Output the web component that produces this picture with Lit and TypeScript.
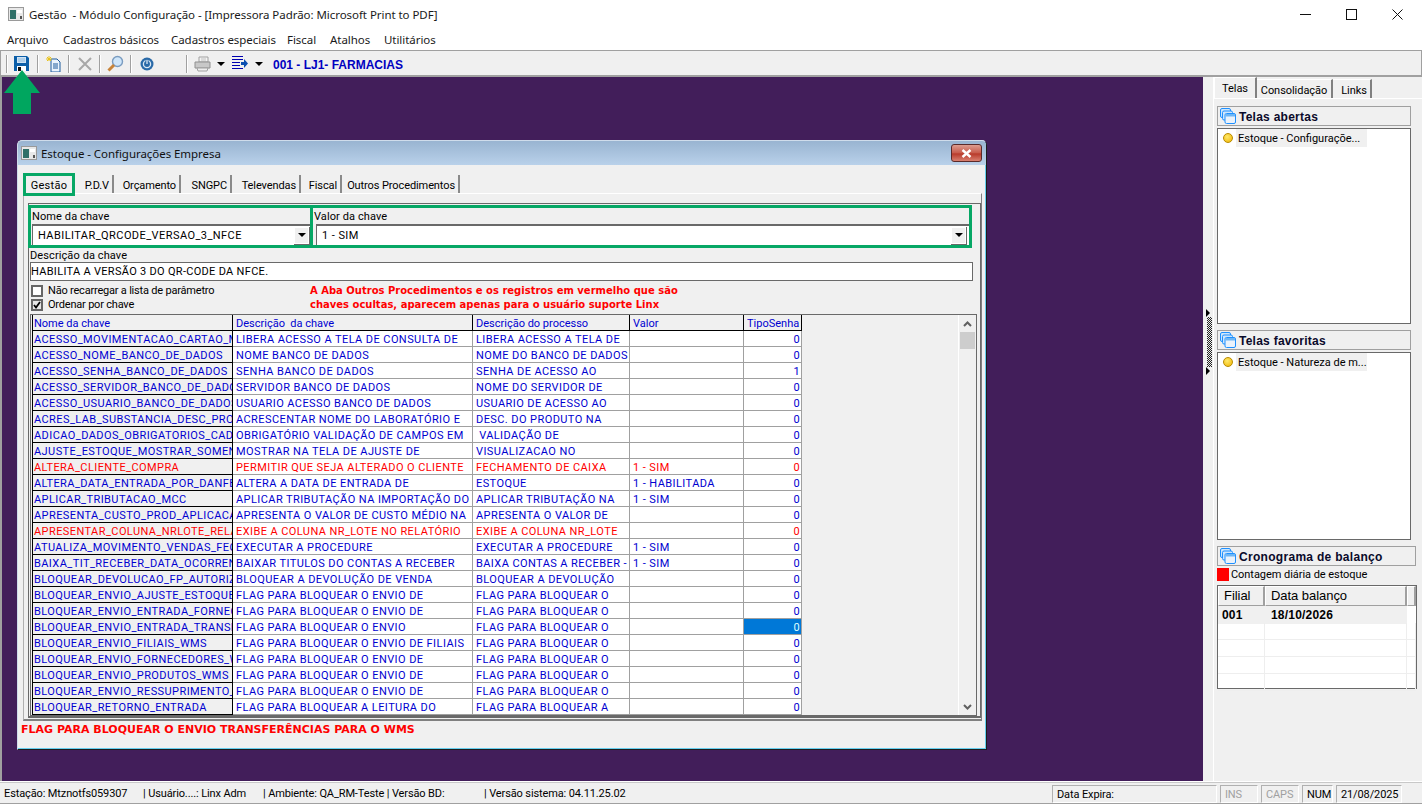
import { LitElement, css, html } from "lit";
import { customElement } from "lit/decorators.js";

type Row = { name: string; desc: string; proc: string; val?: string; tipo?: string; red?: boolean; sel?: boolean };

const FLAG = "FLAG PARA BLOQUEAR O ENVIO DE";
const FLAG2 = "FLAG PARA BLOQUEAR O";

const ROWS: Row[] = [
  { name: "ACESSO_MOVIMENTACAO_CARTAO_MANUAL", desc: "LIBERA ACESSO A TELA DE CONSULTA DE", proc: "LIBERA ACESSO A TELA DE" },
  { name: "ACESSO_NOME_BANCO_DE_DADOS", desc: "NOME BANCO DE DADOS", proc: "NOME DO BANCO DE DADOS" },
  { name: "ACESSO_SENHA_BANCO_DE_DADOS", desc: "SENHA BANCO DE DADOS", proc: "SENHA DE ACESSO AO", tipo: "1" },
  { name: "ACESSO_SERVIDOR_BANCO_DE_DADOS", desc: "SERVIDOR BANCO DE DADOS", proc: "NOME DO SERVIDOR DE" },
  { name: "ACESSO_USUARIO_BANCO_DE_DADOS", desc: "USUARIO ACESSO BANCO DE DADOS", proc: "USUARIO DE ACESSO AO" },
  { name: "ACRES_LAB_SUBSTANCIA_DESC_PROD", desc: "ACRESCENTAR NOME DO LABORATÓRIO E", proc: "DESC. DO PRODUTO NA" },
  { name: "ADICAO_DADOS_OBRIGATORIOS_CADASTRO", desc: "OBRIGATÓRIO VALIDAÇÃO DE CAMPOS EM", proc: " VALIDAÇÃO DE" },
  { name: "AJUSTE_ESTOQUE_MOSTRAR_SOMENTE", desc: "MOSTRAR NA TELA DE AJUSTE DE", proc: "VISUALIZACAO NO" },
  { name: "ALTERA_CLIENTE_COMPRA", desc: "PERMITIR QUE SEJA ALTERADO O CLIENTE", proc: "FECHAMENTO DE CAIXA", val: "1 - SIM", red: true },
  { name: "ALTERA_DATA_ENTRADA_POR_DANFE", desc: "ALTERA A DATA DE ENTRADA DE", proc: "ESTOQUE", val: "1 - HABILITADA" },
  { name: "APLICAR_TRIBUTACAO_MCC", desc: "APLICAR TRIBUTAÇÃO NA IMPORTAÇÃO DO", proc: "APLICAR TRIBUTAÇÃO NA", val: "1 - SIM" },
  { name: "APRESENTA_CUSTO_PROD_APLICACAO", desc: "APRESENTA O VALOR DE CUSTO MÉDIO NA", proc: "APRESENTA O VALOR DE" },
  { name: "APRESENTAR_COLUNA_NRLOTE_RELATORIO", desc: "EXIBE A COLUNA NR_LOTE NO RELATÓRIO", proc: "EXIBE A COLUNA NR_LOTE", red: true },
  { name: "ATUALIZA_MOVIMENTO_VENDAS_FECHAMENTO", desc: "EXECUTAR A PROCEDURE", proc: "EXECUTAR A PROCEDURE", val: "1 - SIM" },
  { name: "BAIXA_TIT_RECEBER_DATA_OCORRENCIA", desc: "BAIXAR TITULOS DO CONTAS A RECEBER", proc: "BAIXA CONTAS A RECEBER -", val: "1 - SIM" },
  { name: "BLOQUEAR_DEVOLUCAO_FP_AUTORIZADA", desc: "BLOQUEAR A DEVOLUÇÃO DE VENDA", proc: "BLOQUEAR A DEVOLUÇÃO" },
  { name: "BLOQUEAR_ENVIO_AJUSTE_ESTOQUE_WMS", desc: FLAG, proc: FLAG2 },
  { name: "BLOQUEAR_ENVIO_ENTRADA_FORNECEDOR", desc: FLAG, proc: FLAG2 },
  { name: "BLOQUEAR_ENVIO_ENTRADA_TRANSFERENCIA", desc: "FLAG PARA BLOQUEAR O ENVIO", proc: FLAG2, sel: true },
  { name: "BLOQUEAR_ENVIO_FILIAIS_WMS", desc: "FLAG PARA BLOQUEAR O ENVIO DE FILIAIS", proc: FLAG2 },
  { name: "BLOQUEAR_ENVIO_FORNECEDORES_WMS", desc: FLAG, proc: FLAG2 },
  { name: "BLOQUEAR_ENVIO_PRODUTOS_WMS", desc: FLAG, proc: FLAG2 },
  { name: "BLOQUEAR_ENVIO_RESSUPRIMENTO_WMS", desc: FLAG, proc: FLAG2 },
  { name: "BLOQUEAR_RETORNO_ENTRADA", desc: "FLAG PARA BLOQUEAR A LEITURA DO", proc: "FLAG PARA BLOQUEAR A" },
];

const TABS: [string, number][] = [
  ["Gestão", 52], ["P.D.V", 39], ["Orçamento", 67], ["SNGPC", 51], ["Televendas", 69], ["Fiscal", 41], ["Outros Procedimentos", 118],
];

const appIcon = html`<svg width="16" height="14" viewBox="0 0 16 14"><rect x=".5" y=".5" width="15" height="13" fill="#e8e8e8" stroke="#9a9a9a"/><rect x="2" y="3" width="6" height="9" fill="#2f7068"/><rect x="9" y="3" width="5" height="3" fill="#fff"/><rect x="12" y="9" width="2" height="3" fill="#555"/></svg>`;

const stackIcon = html`<svg width="16" height="16" viewBox="0 0 16 16"><rect x=".5" y=".5" width="10" height="9" rx="1.5" fill="#cfe6fb" stroke="#1e90ff"/><rect x="2.5" y="3" width="10" height="9" rx="1.5" fill="#cfe6fb" stroke="#1e90ff"/><rect x="5" y="5.5" width="10.5" height="10" rx="1.5" fill="#eaf2fb" stroke="#1e90ff"/><rect x="5.5" y="6" width="9.5" height="2.5" fill="#6db6f5"/></svg>`;

const arrowDown = html`<svg class="drop" width="8" height="4" viewBox="0 0 8 4"><path d="M0 0h8L4 4z" fill="#000"/></svg>`;

@customElement("app-root")
export class AppRoot extends LitElement {
  static styles = css`
    :host {
      display: flex;
      flex-direction: column;
      width: 1422px;
      height: 804px;
      overflow: hidden;
      background: #f0f0f0;
      font: 11px/14px Roboto, "Liberation Sans", sans-serif;
      letter-spacing: -.05px;
      color: #000;
    }
    * { box-sizing: border-box; }

    .titlebar { height: 30px; background: #fff; display: flex; align-items: center; padding: 0 2px 2px 8px; }
    .titlebar .app { font: 11.5px "Noto Sans", sans-serif; letter-spacing: -.05px; margin-left: 5px; white-space: pre; color: #1a1a1a; flex: 1; }
    .winbtn { width: 46px; height: 28px; display: flex; align-items: center; justify-content: center; }
    .menubar { height: 20px; background: #fff; display: flex; align-items: center; font: 11.5px "Noto Sans", sans-serif; letter-spacing: -.05px; color: #1a1a1a; padding: 0 0 2px 7px; }
    .menubar span { white-space: nowrap; }

    .toolbar { height: 27px; background: #f0f0f0; border: 1px solid #a0a0a0; border-bottom: 2px solid #a0a0a0; display: flex; align-items: center; padding: 1px 0 0 5px; }
    .toolbar .sep, .toolbar .grip { width: 2px; height: 18px; background: linear-gradient(90deg, #a0a0a0 50%, #fff 50%); flex: none; }
    .toolbar .ic { display: flex; align-items: center; justify-content: center; flex: none; height: 18px; }
    .toolbar .drop { flex: none; }
    .store { font: bold 12px "Liberation Sans", sans-serif; color: #0000c0; letter-spacing: 0; white-space: pre; margin: 2px 0 0 10px; }

    .body { flex: 1; display: flex; min-height: 0; }
    .desktop { position: relative; width: 1203px; background: #421e5a; border-left: 2px solid #a0a0a0; }
    .up-arrow { position: absolute; left: 2px; top: -7px; z-index: 2; }

    .dialog {
      position: absolute; left: 15px; top: 63px; width: 970px; height: 610px;
      background: #f0f0f0; border-radius: 5px 5px 0 0;
      border: 1px solid #1d1d1d; border-top-color: #cfdceb; border-left-color: #cfdceb;
      box-shadow: inset -1px -1px 0 #66cfef;
      display: flex; flex-direction: column;
    }
    .dlg-title {
      height: 24px; flex: none; display: flex; align-items: center; padding: 0 3px;
      background: linear-gradient(#99b4d1, #b9d1ea);
      border-radius: 4px 4px 0 0;
    }
    .dlg-title .t { font: 11.5px "Noto Sans", sans-serif; letter-spacing: -.05px; margin-left: 4px; flex: 1; color: #111; }
    .dlg-close {
      width: 31px; height: 18px; margin-right: 1px; border: 1px solid #5a2a2a; border-radius: 3px;
      background: linear-gradient(#dd9d90, #c75a4a 50%, #b83a2a 55%, #d98070);
      display: flex; align-items: center; justify-content: center;
    }
    .dlg-body { flex: 1; padding: 0 4px 0 5px; display: flex; flex-direction: column; }
    .tabs { display: flex; height: 28px; padding: 10px 0 0 2px; flex: none; }
    .tab { height: 18px; border-right: 2px solid #8a8a8a; text-align: right; padding-right: 3px; white-space: nowrap; line-height: 21px; letter-spacing: -.1px; }
    .tab.on { height: 23px; margin: -2px 0 -3px -2px; line-height: 19px; border: 3px solid #06a765; position: relative; z-index: 1; text-align: center; padding: 0; letter-spacing: .3px; }

    .page { height: 528px; width: 959px; flex: none; border-top: 1px solid #fff; border-right: 1px solid #808080; border-bottom: 2px solid #808080; border-left: 1px solid #b0b0b0; padding: 9px 0 0 4px; }
    .group { width: 953px; height: 515px; border: 1px solid #696969; border-bottom-width: 2px; }
    .keys { display: flex; margin: 1px 0 0 -1px; height: 43px; }
    .keybox { border: 3px solid #06a765; height: 43px; flex: none; }
    .keybox.a { width: 285px; padding-left: 1px; }
    .keybox.b { width: 662px; margin-left: -3px; padding-left: 3px; }
    .keybox.b label { margin-left: -2px; }
    .keybox.b button { margin-right: 2px; }
    .keybox label { display: block; height: 16px; line-height: 18px; letter-spacing: .1px; }
    .combo { height: 21px; background: #fff; border-top: 2px solid #696969; border-left: 1px solid #696969; display: flex; align-items: center; padding-left: 5px; letter-spacing: .43px; justify-content: space-between; }
    .combo button { width: 16px; height: 18px; padding: 0; background: #f0f0f0; border: none; border-right: 1px solid #696969; border-bottom: 1px solid #696969; box-shadow: inset 0 0 0 1px #fff; display: flex; align-items: center; justify-content: center; }

    .desc { margin: 0 0 0 1px; }
    .desc label { display: block; height: 14px; line-height: 15px; letter-spacing: .1px; }
    .desc .input { width: 943px; height: 19px; background: #fff; border: 1px solid #696969; padding-left: 0; line-height: 17px; letter-spacing: .3px; }
    .opts { display: flex; margin: 3px 0 0 2px; height: 28px; }
    .checks { width: 279px; flex: none; letter-spacing: -.2px; }
    .check { display: flex; align-items: center; height: 14px; gap: 5px; }
    .box { width: 12px; height: 12px; background: #fff; border: 2px solid #666; display: flex; align-items: center; justify-content: center; }
    .box.on { background: #e6e6e6; }
    .note { font: bold 10px/14px "DejaVu Sans", sans-serif; letter-spacing: 0; color: #f00; white-space: nowrap; }

    .grid { margin: 2px 0 0 1px; width: 947px; height: 402px; border: 1px solid #696969; display: flex; background: #f0f0f0; padding-left: 1px; }
    .table { width: 771px; flex: none; }
    .gridrow { display: grid; grid-template-columns: 201px 240px 157px 114px 58px; height: 16px; color: #0000d0; letter-spacing: .42px; }
    .gridrow > div { overflow: hidden; white-space: pre; padding: 0 1px 0 3px; line-height: 18px; border-right: 1px solid #a0a0a0; border-bottom: 1px solid #a0a0a0; background: #fff; height: 16px; }
    .gridrow > div:first-child { background: #f0f0f0; border-color: #000; border-left: 1px solid #000; padding-left: 1px; }
    .gridrow.red { color: #f00; }
    .gridrow .num { text-align: right; }
    .gridrow .sel { background: #0078d7; color: #dff; }
    .gridrow.colhead { letter-spacing: 0; }
    .gridrow.colhead > div { background: #f0f0f0; border-color: #000; line-height: 17px; }
    .sbar { margin-left: auto; width: 18px; border-left: 1px solid #fff; display: flex; flex-direction: column; justify-content: space-between; }
    .sbar .zone { height: 17px; display: flex; align-items: center; justify-content: center; }
    .thumb { height: 17px; background: #cdcdcd; margin: 0 1px; }
    .msg { font: bold 11px/14px "DejaVu Sans", sans-serif; letter-spacing: 0; color: #f00; margin: 2px 0 0 -2px; white-space: nowrap; }

    .side { flex: 1; display: flex; background: #f0f0f0; }
    .split { width: 10px; flex: none; padding: 232px 0 0 3px; }
    .dots { width: 5px; height: 50px; margin: 0 0 0 1px; background: repeating-conic-gradient(#222 0 25%, #eee 0 50%) 0 0 / 2px 2px; }
    .tri { width: 0; height: 0; border-left: 4px solid #000; border-top: 4px solid transparent; border-bottom: 4px solid transparent; }
    .pane { flex: 1; border-left: 1px solid #fff; min-width: 0; }
    .sidetabs { display: flex; height: 21px; margin-top: 1px; border-bottom: 1px solid #fff; align-items: flex-end; }
    .sidetabs span { height: 19px; line-height: 21px; text-align: center; border-right: 2px solid #808080; white-space: nowrap; letter-spacing: -.05px; border-top: 1px solid #fff; }
    .sidetabs span.on { height: 21px; line-height: 22px; border-left: 1px solid #fff; }
    .sidetabs span.links { padding-left: 5px; }
    .stack { padding: 7px 0 0 3px; }
    .head { width: 194px; height: 20px; border: 1px solid #a0a0a0; display: flex; align-items: center; font: bold 12px "Liberation Sans", sans-serif; padding: 1px 0 0 2px; gap: 3px; letter-spacing: .25px; color: #0a0a2a; }
    .head svg { margin-top: -1px; }
    .head.wide { width: 199px; letter-spacing: .3px; }
    .list { width: 194px; background: #fff; border: 1px solid #696969; margin: 2px 0 6px; }
    .item { display: flex; align-items: center; height: 18px; padding-left: 5px; }
    .dot { width: 10px; height: 10px; border-radius: 50%; background: radial-gradient(circle at 40% 35%, #ffe96a, #f0b400); border: 1px solid #b98b00; flex: none; }
    .item span { background: #f0f0f0; margin-left: 3px; padding: 0 2px; width: 131px; height: 18px; line-height: 20px; white-space: nowrap; letter-spacing: 0; }
    .legend { display: flex; align-items: center; height: 15px; margin-top: 1px; }
    .legend i { width: 12px; height: 13px; background: #f00; margin-right: 2px; }
    .sched { width: 200px; height: 104px; margin-top: 3px; border: 1px solid #696969; background: #fff; }
    .srow { display: grid; grid-template-columns: 47px 142px 1fr; height: 17px; }
    .srow > div { border-right: 1px solid #eee; border-bottom: 1px solid #eee; }
    .srow.hd { height: 20px; background: #f0f0f0; }
    .srow.hd > div { font: 13px/18px "Liberation Sans", sans-serif; padding-left: 5px; border-right: 2px solid #a0a0a0; border-bottom: 1px solid #a0a0a0; border-top: 1px solid #fff; border-left: 1px solid #fff; }
    .srow.data { height: 17px; font: bold 12px/18px "Liberation Sans", sans-serif; letter-spacing: .2px; }
    .srow.data > div { background: #f0f0f0; padding-left: 4px; border: none; }
    .srow.data > div:nth-child(2) { padding-left: 6px; }
    .srow.data > div:last-child { background: #fff; }

    .status { height: 23px; flex: none; background: #f0f0f0; border-top: 1px solid #fff; border-bottom: 1px solid #a0a0a0; display: flex; align-items: center; box-shadow: inset 0 1px 0 #c8c8c8; padding-top: 2px; letter-spacing: -.12px; }
    .status span { white-space: pre; flex: none; }
    .cell { height: 18px; line-height: 17px; border: 1px solid #b0b0b0; border-right-color: #fff; border-bottom-color: #fff; flex: none; padding-left: 4px; margin-right: 3px; white-space: nowrap; }
    .cell.off { color: #a0a0a0; }
  `;

  private renderToolbar() {
    return html`
      <div class="toolbar">
        <div class="grip"></div>
        <div class="ic" style="width:29px;padding-right:2px">
          <svg width="15" height="15" viewBox="0 0 15 15"><path d="M0 0h13l2 2v13H0z" fill="#0c5ea8"/><rect x="3" y="1" width="9" height="6" fill="#cfe3f5"/><path d="M4 3h7M4 5h7" stroke="#8fb8dc"/><rect x="3" y="10" width="9" height="5" fill="#fff"/><rect x="4" y="11" width="3" height="4" fill="#111"/></svg>
        </div>
        <div class="sep"></div>
        <div class="ic" style="width:29px">
          <svg width="16" height="16" viewBox="0 0 16 16"><path d="M5 3h6l3 3v10H5z" fill="#eaf4fd" stroke="#1c5a9c"/><path d="M7 8h5M7 10h5M7 12h5" stroke="#1c5a9c"/><path d="M3 0v5M0 3h6M1 1l4 4M5 1 1 5" stroke="#e8c31c"/></svg>
        </div>
        <div class="sep"></div>
        <div class="ic" style="width:29px">
          <svg width="14" height="14" viewBox="0 0 14 14"><path d="M1 1l12 12M13 1 1 13" stroke="#a8a8a8" stroke-width="2"/></svg>
        </div>
        <div class="sep"></div>
        <div class="ic" style="width:29px">
          <svg width="17" height="17" viewBox="0 0 17 17"><circle cx="10.500" cy="6.500" r="5" fill="#cfe6fa" stroke="#7a9cc0" stroke-width="1.400"/><path d="M7 10 1.500 15.500" stroke="#c8843a" stroke-width="3"/></svg>
        </div>
        <div class="sep"></div>
        <div class="ic" style="width:29px">
          <svg width="14" height="14" viewBox="0 0 14 14"><circle cx="7" cy="7" r="6.500" fill="#2a6aa8"/><circle cx="7" cy="7" r="3.600" fill="none" stroke="#dbe8f4" stroke-width="1.300"/><path d="M7 2.500v4.500" stroke="#2a6aa8" stroke-width="3"/><path d="M7 3v4" stroke="#dbe8f4" stroke-width="1.300"/></svg>
        </div>
        <div style="width:25px"></div>
        <div class="sep"></div>
        <div class="ic" style="width:29px">
          <svg width="17" height="16" viewBox="0 0 17 16"><path d="M5 1h9v5H5z" fill="#f4f4f4" stroke="#a0a0a0"/><path d="M7 3h5M7 5h5" stroke="#c0c0c0"/><path d="M1 6h15v6H1z" fill="#c8c8c8" stroke="#909090"/><path d="M3 12h11l-1 3H4z" fill="#eee" stroke="#a0a0a0"/></svg>
        </div>
        ${arrowDown}
        <div class="ic" style="width:30px">
          <svg width="16" height="15" viewBox="0 0 16 15"><path d="M0 .5h11M0 3.500h11M0 6.500h8M0 9.500h8M0 12.500h11" stroke="#0000b0"/><path d="M9 6h3V3l4 4.500-4 4.500V9H9z" fill="#0a4fb0"/></svg>
        </div>
        ${arrowDown}
        <span class="store">001 - LJ1- FARMACIAS</span>
      </div>
    `;
  }

  private renderGrid() {
    return html`
      <div class="grid">
        <div class="table">
          <div class="gridrow colhead">
            <div>Nome da chave</div><div>Descrição  da chave</div><div>Descrição do processo</div><div>Valor</div><div>TipoSenha</div>
          </div>
          ${ROWS.map(
            (r) => html`
              <div class="gridrow ${r.red ? "red" : ""}">
                <div>${r.name}</div><div>${r.desc}</div><div>${r.proc}</div><div>${r.val ?? ""}</div>
                <div class="num ${r.sel ? "sel" : ""}">${r.tipo ?? "0"}</div>
              </div>
            `
          )}
        </div>
        <div class="sbar">
          <div>
            <div class="zone"><svg width="9" height="6" viewBox="0 0 9 6"><path d="M1 5l3.500-3.500L8 5" fill="none" stroke="#606060" stroke-width="2"/></svg></div>
            <div class="thumb"></div>
          </div>
          <div class="zone"><svg width="9" height="6" viewBox="0 0 9 6"><path d="M1 1l3.500 3.500L8 1" fill="none" stroke="#606060" stroke-width="2"/></svg></div>
        </div>
      </div>
    `;
  }

  private renderDialog() {
    return html`
      <div class="dialog">
        <div class="dlg-title">
          ${appIcon}
          <span class="t">Estoque - Configurações Empresa</span>
          <div class="dlg-close">
            <svg width="11" height="9" viewBox="0 0 11 9"><path d="M1.500 1l8 7M9.500 1l-8 7" stroke="#fff" stroke-width="2.400"/></svg>
          </div>
        </div>
        <div class="dlg-body">
          <div class="tabs">
            ${TABS.map(([t, w], i) => html`<div class="tab ${i === 0 ? "on" : ""}" style="width:${w}px">${t}</div>`)}
          </div>
          <div class="page">
            <div class="group">
              <div class="keys">
                <div class="keybox a">
                  <label>Nome da chave</label>
                  <div class="combo"><span>HABILITAR_QRCODE_VERSAO_3_NFCE</span><button>${arrowDown}</button></div>
                </div>
                <div class="keybox b">
                  <label>Valor da chave</label>
                  <div class="combo"><span>1 - SIM</span><button>${arrowDown}</button></div>
                </div>
              </div>
              <div class="desc">
                <label>Descrição da chave</label>
                <div class="input">HABILITA A VERSÃO 3 DO QR-CODE DA NFCE.</div>
              </div>
              <div class="opts">
                <div class="checks">
                  <div class="check"><div class="box"></div>Não recarregar a lista de parâmetro</div>
                  <div class="check">
                    <div class="box on"><svg width="8" height="8" viewBox="0 0 8 8"><path d="M1 4l2 2.500L7 1" fill="none" stroke="#000" stroke-width="1.800"/></svg></div>
                    Ordenar por chave
                  </div>
                </div>
                <div class="note">
                  A Aba Outros Procedimentos e os registros em vermelho que são<br />
                  chaves ocultas, aparecem apenas para o usuário suporte Linx
                </div>
              </div>
              ${this.renderGrid()}
            </div>
          </div>
          <div class="msg">FLAG PARA BLOQUEAR O ENVIO TRANSFERÊNCIAS PARA O WMS</div>
        </div>
      </div>
    `;
  }

  private renderSide() {
    return html`
      <div class="side">
        <div class="split">
          <div class="tri"></div>
          <div class="dots"></div>
          <div class="tri"></div>
        </div>
        <div class="pane">
          <div class="sidetabs">
            <span class="on" style="width:43px">Telas</span>
            <span style="width:76px">Consolidação</span>
            <span class="links" style="width:39px">Links</span>
          </div>
          <div class="stack">
            <div class="head">${stackIcon}Telas abertas</div>
            <div class="list" style="height:196px">
              <div class="item"><i class="dot"></i><span>Estoque - Configuraçõe...</span></div>
            </div>
            <div class="head">${stackIcon}Telas favoritas</div>
            <div class="list" style="height:188px">
              <div class="item"><i class="dot"></i><span>Estoque - Natureza de m...</span></div>
            </div>
            <div class="head wide">${stackIcon}Cronograma de balanço</div>
            <div class="legend"><i></i><span>Contagem diária de estoque</span></div>
            <div class="sched">
              <div class="srow hd"><div>Filial</div><div>Data balanço</div><div></div></div>
              <div class="srow data"><div>001</div><div>18/10/2026</div><div></div></div>
              ${[0, 1, 2, 3].map(() => html`<div class="srow"><div></div><div></div><div></div></div>`)}
            </div>
          </div>
        </div>
      </div>
    `;
  }

  render() {
    return html`
      <div class="titlebar">
        ${appIcon}
        <span class="app">Gestão  - Módulo Configuração - [Impressora Padrão: Microsoft Print to PDF]</span>
        <div class="winbtn"><svg width="11" height="11" viewBox="0 0 11 11"><path d="M0 5.500h11" stroke="#111"/></svg></div>
        <div class="winbtn"><svg width="11" height="11" viewBox="0 0 11 11"><rect x=".5" y=".5" width="10" height="10" fill="none" stroke="#111"/></svg></div>
        <div class="winbtn"><svg width="11" height="11" viewBox="0 0 11 11"><path d="M.5.500l10 10M10.500.500l-10 10" stroke="#111"/></svg></div>
      </div>
      <div class="menubar">
        <span style="width:56px">Arquivo</span>
        <span style="width:108px">Cadastros básicos</span>
        <span style="width:116px">Cadastros especiais</span>
        <span style="width:43px">Fiscal</span>
        <span style="width:54px">Atalhos</span>
        <span>Utilitários</span>
      </div>
      ${this.renderToolbar()}
      <div class="body">
        <div class="desktop">
          <svg class="up-arrow" width="36" height="44" viewBox="0 0 36 44"><path d="M18 0 36 23H27V44H9V23H0z" fill="#00a65f"/></svg>
          ${this.renderDialog()}
        </div>
        ${this.renderSide()}
      </div>
      <div class="status">
        <span style="width:143px;padding-left:4px">Estação: Mtznotfs059307</span>
        <span style="width:120px">| Usuário....: Linx Adm</span>
        <span style="width:221px">| Ambiente: QA_RM-Teste | Versão BD:</span>
        <span style="width:568px">| Versão sistema: 04.11.25.02</span>
        <div class="cell" style="width:165px">Data Expira:</div>
        <div class="cell off" style="width:38px">INS</div>
        <div class="cell off" style="width:38px">CAPS</div>
        <div class="cell" style="width:31px">NUM</div>
        <div class="cell" style="width:66px">21/08/2025</div>
      </div>
    `;
  }
}
